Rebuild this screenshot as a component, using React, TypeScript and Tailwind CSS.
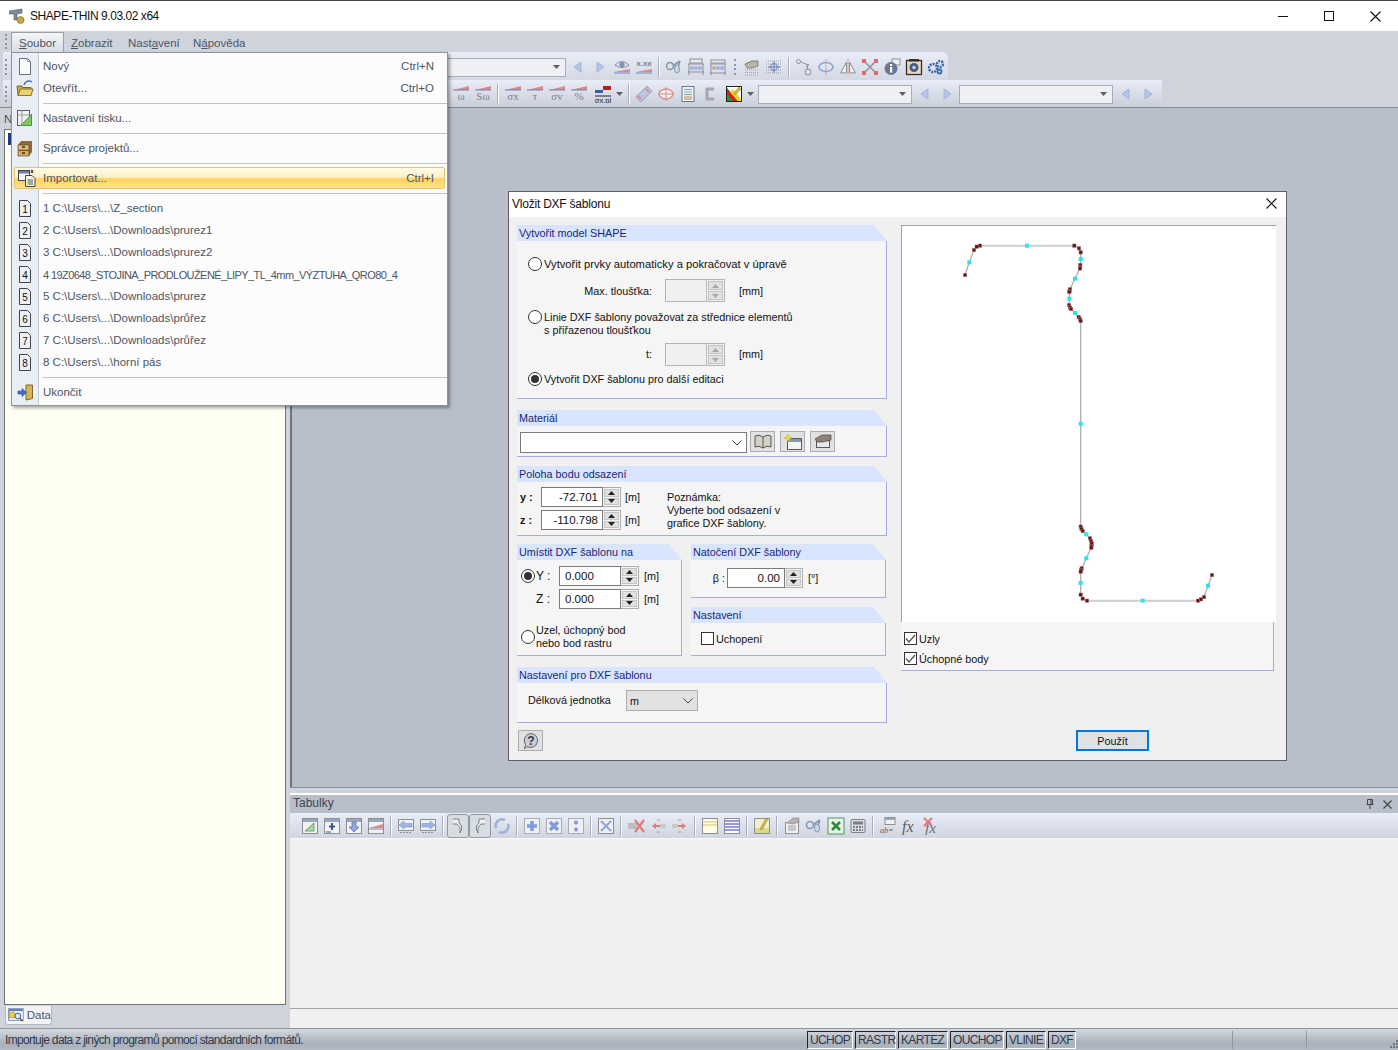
import React from "react";

// Small wedge used by the result-value toolbar icons
const Wedge = ({ label }: { label: string }) => (
    <svg width="18" height="18" viewBox="0 0 18 18">
        <path d="M1 5 L17 1 V5 Z" fill="#d98a8a" />
        <path d="M1 5 H17" stroke="#6f86b8" strokeWidth="1" />
        <text x="9" y="15" textAnchor="middle" fontSize="11" fill="#7b8290" fontFamily="Liberation Serif, serif">{label}</text>
    </svg>
);

const TableGrid = ({ head = "#9aa7c0", cell = "#f2f2f2" }: { head?: string; cell?: string }) => (
    <>
        <rect x="1.5" y="1.5" width="15" height="15" fill={cell} stroke="#8d8f94" />
        <rect x="2" y="2" width="14" height="3" fill={head} />
    </>
);

const icons: Record<string, React.ReactNode> = {
    arrL: <path d="M12 4 V14 L5 9 Z" fill="#b4c4ea" stroke="#a3b5df" />,
    arrR: <path d="M6 4 V14 L13 9 Z" fill="#b4c4ea" stroke="#a3b5df" />,
    eye: (
        <>
            <path d="M2 7 Q9 0 16 7 Q9 12 2 7 Z" fill="#dfe6f2" stroke="#7d8ba3" />
            <circle cx="9" cy="6.5" r="2.6" fill="#7c8fb0" />
            <path d="M1 14 L17 11 V14 Z" fill="#d98a8a" />
            <path d="M1 15 H17" stroke="#6f86b8" />
        </>
    ),
    xxx: (
        <>
            <text x="9" y="8" textAnchor="middle" fontSize="8" fontWeight="700" fill="#7b8290" fontFamily="Liberation Sans, sans-serif">x.xx</text>
            <path d="M1 14 L17 11 V14 Z" fill="#d98a8a" />
            <path d="M1 15 H17" stroke="#6f86b8" />
        </>
    ),
    glasses: (
        <>
            <circle cx="5" cy="8" r="3.5" fill="#dde4ee" stroke="#8597ae" strokeWidth="1.6" />
            <path d="M8 8 L12 5 L15 3 M12 12 L15 3" stroke="#8597ae" strokeWidth="1.6" fill="none" />
            <ellipse cx="12" cy="11" rx="2.5" ry="4" fill="#cdd8e6" stroke="#8597ae" />
        </>
    ),
    abacus: (
        <>
            <rect x="3" y="1" width="12" height="4" fill="#e6e9ee" stroke="#8d8f94" />
            <path d="M1 6 H17 M1 14 H17 M2 6 V17 M16 6 V17" stroke="#8d8f94" />
            <circle cx="5" cy="10" r="2" fill="#9fb0d8" /><circle cx="9" cy="10" r="2" fill="#9fb0d8" /><circle cx="13" cy="10" r="2" fill="#9fb0d8" />
        </>
    ),
    abacus2: (
        <>
            <rect x="2" y="2" width="14" height="3" fill="#e6e9ee" stroke="#8d8f94" />
            <path d="M1 6 H17 M1 15 H17 M2 6 V17 M16 6 V17" stroke="#8d8f94" />
            <circle cx="5" cy="10" r="2" fill="#b8b49a" /><circle cx="9" cy="10" r="2" fill="#9fb0d8" /><circle cx="13" cy="10" r="2" fill="#9fb0d8" />
        </>
    ),
    gridHand: (
        <>
            <path d="M2 12 H16 M2 14.500 H16 M2 17 H16" stroke="#9a9da3" strokeDasharray="1 1" />
            <path d="M2 6 L9 3 H15 V8 L9 10 H4 Z" fill="#b9b3ad" stroke="#85807a" />
        </>
    ),
    gridCross: (
        <>
            <path d="M1 3 H17 M1 6 H17 M1 9 H17 M1 12 H17 M1 15 H17" stroke="#9a9da3" strokeDasharray="1 1" />
            <circle cx="9" cy="9" r="3.500" fill="none" stroke="#6f7fc0" />
            <path d="M9 3 V15 M3 9 H15" stroke="#6f7fc0" />
        </>
    ),
    nodes: (
        <>
            <circle cx="3.500" cy="3.500" r="2" fill="none" stroke="#8d8f94" />
            <circle cx="13" cy="14" r="3" fill="none" stroke="#8d8f94" />
            <path d="M6 4 L13 7 L12 11 M14 6 L11 9" stroke="#8d8f94" fill="none" />
        </>
    ),
    rotate: (
        <>
            <ellipse cx="9" cy="9" rx="7" ry="4.500" fill="#dce5f4" stroke="#8da3cc" strokeWidth="1.500" />
            <path d="M9 1 V17" stroke="#d98a8a" strokeDasharray="2 1" />
        </>
    ),
    mirror: (
        <>
            <path d="M7.500 4 V15 H1.500 Z" fill="#eef0f3" stroke="#8d8f94" />
            <path d="M10.500 4 V15 H16.500 Z" fill="#eef0f3" stroke="#8d8f94" />
            <path d="M9 1 V17" stroke="#d98a8a" strokeDasharray="2 1" />
        </>
    ),
    scale: (
        <>
            <path d="M3 3 L15 15 M15 3 L3 15" stroke="#8d8f94" strokeWidth="1.500" />
            <path d="M1 1 h4 v4 h-4 Z M13 1 h4 v4 h-4 Z M1 13 h4 v4 h-4 Z M13 13 h4 v4 h-4 Z" fill="#e0696b" />
        </>
    ),
    info: (
        <>
            <rect x="9" y="1" width="8" height="6" fill="#eef0f3" stroke="#8d8f94" />
            <circle cx="8" cy="10.500" r="6.500" fill="#6c7796" />
            <rect x="7" y="9" width="2.200" height="5.500" fill="#fff" />
            <rect x="7" y="6" width="2.200" height="2" fill="#fff" />
        </>
    ),
    photo: (
        <>
            <rect x="1.500" y="2.500" width="15" height="14" fill="#e8d8b8" stroke="#303030" strokeWidth="1.300" />
            <circle cx="9" cy="9.500" r="4.500" fill="#3d5f96" />
            <circle cx="9" cy="9.500" r="1.700" fill="#e8d8b8" />
            <rect x="4" y="1" width="10" height="2.500" fill="#303030" />
        </>
    ),
    gears: (
        <>
            <circle cx="6" cy="10" r="4" fill="none" stroke="#3a6bb0" strokeWidth="2.500" strokeDasharray="2 1" />
            <circle cx="13" cy="6" r="3" fill="none" stroke="#3a6bb0" strokeWidth="2.500" strokeDasharray="2 1" />
            <circle cx="12.500" cy="13.500" r="2" fill="none" stroke="#3a6bb0" strokeWidth="1.800" />
        </>
    ),
    oxpl: (
        <>
            <rect x="1" y="5" width="8" height="3" fill="#3b5ca8" />
            <rect x="9" y="1" width="8" height="4" fill="#b32020" />
            <path d="M1 11 H17" stroke="#222" />
            <text x="9" y="17.500" textAnchor="middle" fontSize="7.500" fill="#222" fontFamily="Liberation Sans, sans-serif">σx,pl</text>
        </>
    ),
    ruler: (
        <>
            <path d="M1 12 L12 1 L17 6 L6 17 Z" fill="#b8c6e2" stroke="#8da3cc" />
            <path d="M3 11 L6 14 M11 4 L14 7" stroke="#e08a8a" strokeWidth="2" />
        </>
    ),
    target: (
        <>
            <ellipse cx="9" cy="9" rx="7" ry="5" fill="#f1f1f1" stroke="#d98a8a" strokeWidth="1.300" />
            <path d="M1 9 H17 M9 2 V16" stroke="#d98a8a" />
        </>
    ),
    listDoc: (
        <>
            <rect x="3" y="1.500" width="12" height="15" fill="#eef0f3" stroke="#73777f" />
            <path d="M5 4.500 H13 M5 7 H13" stroke="#8aa3d0" strokeWidth="1.200" />
            <path d="M5 9.500 H13" stroke="#7fb27f" strokeWidth="1.200" />
            <path d="M5 12 H13" stroke="#d0a070" strokeWidth="1.200" />
            <path d="M5 14 H13" stroke="#a0a0a0" strokeWidth="1.200" />
        </>
    ),
    bracket: <path d="M13 4 H6 V14 H13" fill="none" stroke="#a4a7ad" strokeWidth="3" />,
    colors: (
        <>
            <rect x="1.500" y="1.500" width="15" height="15" fill="#fff" stroke="#222" />
            <path d="M2 3 L13 16 H7 L2 10 Z" fill="#d62020" />
            <path d="M2 9 L8 16 H2 Z" fill="#1f9a2b" />
            <path d="M8 4 L16 14 V16 H13 L5 7 Z" fill="#f0d820" />
            <path d="M14 2 L16 4 L10 10 L9 8 Z" fill="#d9b94c" stroke="#80702c" strokeWidth=".5" />
        </>
    ),
    tAngle: (
        <>
            <TableGrid />
            <path d="M4 14 L13 6 V14 Z" fill="#a7d49f" stroke="#6fa66a" />
        </>
    ),
    tPlus: (
        <>
            <TableGrid />
            <path d="M9 6 V13 M6 9.500 H12" stroke="#33599c" strokeWidth="2" />
            <path d="M3 15 H8" stroke="#33599c" />
        </>
    ),
    tDown: (
        <>
            <TableGrid />
            <path d="M7 5 H11 V10 H14 L9 15 L4 10 H7 Z" fill="#8fa8d8" stroke="#6f88bc" />
        </>
    ),
    tWedge: (
        <>
            <TableGrid />
            <path d="M2 11 L16 7 V11 Z" fill="#d98a8a" />
            <path d="M2 12 H16" stroke="#6f86b8" />
        </>
    ),
    tLeft: (
        <>
            <rect x="1.500" y="2.500" width="15" height="11" fill="#eef0f3" stroke="#8d8f94" />
            <path d="M2 8 L7 4 V6.500 H15 V10 H7 V12 Z" fill="#9fb5e4" stroke="#7f95c8" strokeWidth=".6" />
            <path d="M3 15.500 H15" stroke="#8d8f94" strokeDasharray="2 1" />
        </>
    ),
    tRight: (
        <>
            <rect x="1.500" y="2.500" width="15" height="11" fill="#eef0f3" stroke="#8d8f94" />
            <path d="M16 8 L11 4 V6.500 H3 V10 H11 V12 Z" fill="#9fb5e4" stroke="#7f95c8" strokeWidth=".6" />
            <path d="M3 15.500 H15" stroke="#8d8f94" strokeDasharray="2 1" />
        </>
    ),
    undo: <path d="M4 2 H10 V6 Q15 9 11 16 Q12 10 8 7 H4" fill="#eef0f3" stroke="#7a7f88" />,
    redo: <path d="M14 2 H8 V6 Q3 9 7 16 Q6 10 10 7 H14" fill="#eef0f3" stroke="#7a7f88" />,
    sync: (
        <>
            <path d="M3 11 A6.500 6.500 0 0 1 12 3" fill="none" stroke="#9db0d6" strokeWidth="2.500" />
            <path d="M15 7 A6.500 6.500 0 0 1 6 15" fill="none" stroke="#9db0d6" strokeWidth="2.500" />
        </>
    ),
    sqPlus: (
        <>
            <rect x="1.500" y="1.500" width="15" height="15" fill="#eef0f3" stroke="#a9acb2" />
            <path d="M9 4 V14 M4 9 H14" stroke="#7f9bdc" strokeWidth="3.500" />
        </>
    ),
    sqMul: (
        <>
            <rect x="1.500" y="1.500" width="15" height="15" fill="#eef0f3" stroke="#a9acb2" />
            <path d="M5 5 L13 13 M13 5 L5 13" stroke="#7f9bdc" strokeWidth="3.500" />
        </>
    ),
    sqDiv: (
        <>
            <rect x="1.500" y="1.500" width="15" height="15" fill="#eef0f3" stroke="#a9acb2" />
            <circle cx="9" cy="5.500" r="2" fill="#7f9bdc" /><circle cx="9" cy="12.500" r="2" fill="#7f9bdc" />
        </>
    ),
    sqX: (
        <>
            <rect x="1.500" y="1.500" width="15" height="15" fill="#eef0f3" stroke="#8d8f94" />
            <path d="M4 4 L14 14 M14 4 L4 14" stroke="#8fa6da" strokeWidth="2" />
        </>
    ),
    delRow: (
        <>
            <path d="M1 6 H10 V12 H1 Z" fill="#bdbdbd" />
            <path d="M8 3 L17 15 M17 3 L8 15" stroke="#e07a7a" strokeWidth="2.200" />
        </>
    ),
    colL: (
        <>
            <path d="M3 9 L7 6 V8 H11 V10 H7 V12 Z" fill="#e07a7a" />
            <rect x="11" y="7" width="6" height="4" fill="#c9c9c9" />
            <path d="M8 3 H11 M8 15 H11" stroke="#a0a0a0" />
        </>
    ),
    colR: (
        <>
            <path d="M15 9 L11 6 V8 H7 V10 H11 V12 Z" fill="#e07a7a" />
            <rect x="1" y="7" width="6" height="4" fill="#c9c9c9" />
            <path d="M7 3 H10 M7 15 H10" stroke="#a0a0a0" />
        </>
    ),
    yellowT: (
        <>
            <rect x="1.500" y="1.500" width="15" height="15" fill="#fffde4" stroke="#8d8f94" />
            <path d="M2 5 H16 M2 8 H16" stroke="#d3c560" strokeWidth="1.200" />
        </>
    ),
    blueT: (
        <>
            <rect x="1.500" y="1.500" width="15" height="15" fill="#fff" stroke="#8d8f94" />
            <path d="M2 4 H16 M2 7 H16 M2 10 H16 M2 13 H16" stroke="#7378d0" strokeWidth="1.500" />
        </>
    ),
    pencilT: (
        <>
            <rect x="1.500" y="1.500" width="15" height="15" fill="#f0efcc" stroke="#8d8f94" />
            <path d="M2 11 H16 V16 H2 Z" fill="#dcd883" />
            <path d="M13 1 L15 2 L9 13 L7 12 Z" fill="#d9b94c" stroke="#8c7a30" strokeWidth=".5" />
        </>
    ),
    clipDoc: (
        <>
            <rect x="2.500" y="5.500" width="13" height="11" fill="#f2f2f2" stroke="#8d8f94" />
            <path d="M5 9 H13 M5 11 H13 M5 13 H13" stroke="#9a9da3" />
            <path d="M4 6 L10 1 H16 V5 L10 7 Z" fill="#b9b3ad" stroke="#85807a" strokeWidth=".6" />
        </>
    ),
    excel: (
        <>
            <rect x="1" y="1" width="16" height="16" fill="#e6f2e6" stroke="#4f9558" />
            <path d="M5 5 L13 13 M13 5 L5 13" stroke="#2c8a3a" strokeWidth="2.500" />
        </>
    ),
    calc: (
        <>
            <rect x="2" y="2.500" width="14" height="13" rx="1" fill="#dcdde0" stroke="#7f8288" />
            <rect x="4" y="4.500" width="10" height="3" fill="#7a7d82" />
            <path d="M4 10 H14 M4 13 H14" stroke="#5f6268" strokeDasharray="2 1" strokeWidth="1.400" />
        </>
    ),
    abEq: (
        <>
            <rect x="6" y="0.500" width="10" height="7" fill="#f2f2f2" stroke="#8d8f94" />
            <rect x="6" y="1" width="10" height="2" fill="#9aa7c0" />
            <text x="1" y="16" fontSize="8" fontStyle="italic" fill="#5c6066" fontFamily="Liberation Serif, serif">ab=</text>
        </>
    ),
    fx: <text x="1" y="15" fontSize="16" fontStyle="italic" fill="#5c6066" fontFamily="Liberation Serif, serif">fx</text>,
    fxDel: (
        <>
            <text x="2" y="16" fontSize="15" fontStyle="italic" fill="#6c7076" fontFamily="Liberation Serif, serif">fx</text>
            <path d="M1 1 L9 9 M9 1 L1 9" stroke="#e07a7a" strokeWidth="2" />
        </>
    ),
};

const Ic = ({ n }: { n: string }) => (
    <span className="w-[22px] h-[22px] flex items-center justify-center shrink-0">
        <svg width="18" height="18" viewBox="0 0 18 18">{icons[n]}</svg>
    </span>
);

const WIc = ({ label }: { label: string }) => (
    <span className="w-[22px] h-[22px] flex items-center justify-center shrink-0">
        <Wedge label={label} />
    </span>
);

const Sep = () => (
    <span className="w-[8px] h-[20px] flex justify-center shrink-0">
        <span className="w-px h-full bg-[#a8adb8] border-r border-white box-content" />
    </span>
);

const Grip = () => (
    <span className="w-[3px] h-[18px] shrink-0 flex flex-col justify-between py-[1px]">
        {[0, 1, 2, 3].map((i) => (
            <span key={i} className="w-[2px] h-[2px] bg-[#8d93a0]" />
        ))}
    </span>
);

const Caret = () => (
    <svg width="7" height="4" viewBox="0 0 7 4" className="shrink-0">
        <path d="M0 0 H7 L3.500 4 Z" fill="#606060" />
    </svg>
);

const TbCombo = ({ w }: { w: string }) => (
    <span className={`${w} h-[19px] shrink-0 bg-[#eef0f5] border border-[#a9adb4] flex items-center justify-end pr-[5px]`}>
        <Caret />
    </span>
);

// File menu
const menuText = "text-[#4d5564]";

const NumDoc = ({ n }: { n: number }) => (
    <svg width="14" height="17" viewBox="0 0 14 17">
        <path d="M1.500 .5 H9.500 L12.500 3.500 V16.500 H1.500 Z" fill="#eef0f3" stroke="#40454d" />
        <text x="7" y="13" textAnchor="middle" fontSize="10" fill="#111" fontFamily="Liberation Sans, sans-serif">{n}</text>
    </svg>
);

const MenuIcons: Record<string, React.ReactNode> = {
    new: (
        <svg width="14" height="17" viewBox="0 0 14 17">
            <path d="M1.500 .5 H9.500 L12.500 3.500 V16.500 H1.500 Z" fill="#fbfbfb" stroke="#6a6f78" />
            <path d="M9.500 .5 V3.500 H12.500" fill="none" stroke="#9a9fa8" />
        </svg>
    ),
    open: (
        <svg width="18" height="17" viewBox="0 0 18 17">
            <path d="M8 5 A5 5 0 0 1 16 2" fill="none" stroke="#4f78b8" strokeWidth="1.500" />
            <path d="M1 6 H6 L7 7.500 H15 V15.500 H2 Z" fill="#c7a53f" stroke="#7d6a28" />
            <path d="M2 15.500 L4.500 9 H17 L15 15.500 Z" fill="#eed271" stroke="#8a7430" />
        </svg>
    ),
    print: (
        <svg width="18" height="18" viewBox="0 0 18 18">
            <rect x="1.500" y="1.500" width="12" height="15" fill="#f2f2f2" stroke="#5c6066" />
            <path d="M1.500 6 H13.500 M6 1.500 V16.500" stroke="#9a9da3" />
            <path d="M5 16.500 L15.500 5 V16.500 Z" fill="#7fc764" stroke="#4f9a3d" />
        </svg>
    ),
    cab: (
        <svg width="18" height="17" viewBox="0 0 18 17">
            <path d="M5 1 H16 V12 L13 16 H2 V5 Z" fill="#8a6a3c" />
            <path d="M2 5 H13 V10 H2 Z" fill="#e6bd78" stroke="#5d4522" strokeWidth=".7" />
            <path d="M2 10.500 H13 V16 H2 Z" fill="#d9a95f" stroke="#5d4522" strokeWidth=".7" />
            <path d="M6 7 H9 M6 13 H9" stroke="#3a2a10" strokeWidth="1.300" />
        </svg>
    ),
    import: (
        <svg width="18" height="18" viewBox="0 0 18 18">
            <rect x=".5" y="1.500" width="11" height="10" fill="#f5f5f5" stroke="#40454d" />
            <rect x="1" y="2" width="10" height="2.500" fill="#6d7fa8" />
            <path d="M7.500 6.500 H14 L17 9.500 V17.500 H7.500 Z" fill="#f7f4e6" stroke="#40454d" />
            <path d="M9.500 11 H15 M9.500 13 H15 M9.500 15 H15" stroke="#55595f" />
            <path d="M13 1 L15 4 M15 1 L13 4" stroke="#222" />
        </svg>
    ),
    exit: (
        <svg width="17" height="17" viewBox="0 0 17 17">
            <path d="M9 1 L15.500 1 V14.500 L9 16 Z" fill="#d8b155" stroke="#7d6a28" />
            <path d="M1 7 H5 V4.500 L9.500 8.500 L5 12.500 V10 H1 Z" fill="#3f6fc4" stroke="#264d94" strokeWidth=".6" />
        </svg>
    ),
};

const MenuRow = ({ icon, label, kbd, labelClass = "" }: { icon: React.ReactNode; label: string; kbd?: string; labelClass?: string }) => (
    <div className="h-[22px] flex items-center">
        <div className="w-[26px] flex justify-center shrink-0">{icon}</div>
        <span className={`ml-[5px] pt-[2px] whitespace-nowrap ${menuText} ${labelClass}`}>{label}</span>
        {kbd && <span className={`ml-auto mr-[13px] pt-[2px] ${menuText}`}>{kbd}</span>}
    </div>
);

const MenuSep = () => (
    <div className="h-[8px] flex items-center pl-[31px]">
        <div className="h-px w-full bg-[#bfc2c7]" />
    </div>
);

const FileMenu = () => (
    <div className="absolute left-[11px] top-[52px] w-[437px] h-[354px] z-20 bg-[#fcfcfc] border border-[#8f939a] shadow-[2px_2px_3px_rgba(0,0,0,0.35)] pt-[2px] bg-[linear-gradient(90deg,#e9edf6_26px,#c5cad4_26px,#c5cad4_27px,#fcfcfc_27px)]">
        <MenuRow icon={MenuIcons.new} label="Nový" kbd="Ctrl+N" />
        <MenuRow icon={MenuIcons.open} label="Otevřít..." kbd="Ctrl+O" />
        <MenuSep />
        <MenuRow icon={MenuIcons.print} label="Nastavení tisku..." />
        <MenuSep />
        <MenuRow icon={MenuIcons.cab} label="Správce projektů..." />
        <MenuSep />
        <div className="h-[22px] flex items-center mx-[2px] border border-[#e5c365] rounded-[2px] bg-[linear-gradient(#fffbea_0%,#fff1c4_45%,#fdd25f_55%,#fee28e_100%)]">
            <div className="w-[23px] flex justify-center shrink-0">{MenuIcons.import}</div>
            <span className={`ml-[5px] pt-[2px] ${menuText}`}>Importovat...</span>
            <span className={`ml-auto mr-[10px] pt-[2px] ${menuText}`}>Ctrl+I</span>
        </div>
        <MenuSep />
        {[
            "1 C:\\Users\\...\\Z_section",
            "2 C:\\Users\\...\\Downloads\\prurez1",
            "3 C:\\Users\\...\\Downloads\\prurez2",
            "4 19Z0648_STOJINA_PRODLOUŽENÉ_LIPY_TL_4mm_VÝZTUHA_QRO80_4",
            "5 C:\\Users\\...\\Downloads\\prurez",
            "6 C:\\Users\\...\\Downloads\\průřez",
            "7 C:\\Users\\...\\Downloads\\průřez",
            "8 C:\\Users\\...\\horní pás",
        ].map((t, i) => (
            <MenuRow key={t + i} icon={<NumDoc n={i + 1} />} label={t} labelClass={i === 3 ? "text-[11px] tracking-[-0.58px]" : ""} />
        ))}
        <MenuSep />
        <MenuRow icon={MenuIcons.exit} label="Ukončit" />
    </div>
);

// Dialog pieces
const Group = ({ title, className, children }: { title: string; className: string; children?: React.ReactNode }) => (
    <div className={`flex flex-col shrink-0 ${className}`}>
        <div className="h-[16px] shrink-0 pl-[2px] flex items-center bg-[#d9e5fc] text-[#16267a] [clip-path:polygon(0_0,calc(100%-13px)_0,100%_100%,0_100%)]">
            {title}
        </div>
        <div className="flex-1 bg-[#f5f5f5] border-r border-b border-[#a5abe8]">{children}</div>
    </div>
);

const Radio = ({ on }: { on?: boolean }) => (
    <span className="w-[14px] h-[14px] shrink-0 rounded-full border border-[#333] bg-white flex items-center justify-center">
        {on && <span className="w-[8px] h-[8px] rounded-full bg-[#333]" />}
    </span>
);

const Check = ({ on }: { on?: boolean }) => (
    <span className="w-[13px] h-[13px] shrink-0 border border-[#333] bg-white flex items-center justify-center">
        {on && (
            <svg width="11" height="11" viewBox="0 0 11 11">
                <path d="M1 5.500 L4 9 L10 2" fill="none" stroke="#555" strokeWidth="1.300" />
            </svg>
        )}
    </span>
);

const SpinBtns = ({ off }: { off?: boolean }) => {
    const c = off ? "#a8a8a8" : "#222";
    return (
        <span className={`w-[18px] h-full shrink-0 flex flex-col gap-px p-px ${off ? "border-l border-[#bdbdbd]" : "border border-l-0 border-[#adadad]"}`}>
            <span className="flex-1 flex items-center justify-center bg-[#e1e1e1] border border-[#c4c4c4]">
                <svg width="7" height="4" viewBox="0 0 7 4"><path d="M0 4 H7 L3.500 0 Z" fill={c} /></svg>
            </span>
            <span className="flex-1 flex items-center justify-center bg-[#e1e1e1] border border-[#c4c4c4]">
                <svg width="7" height="4" viewBox="0 0 7 4"><path d="M0 0 H7 L3.500 4 Z" fill={c} /></svg>
            </span>
        </span>
    );
};

const Spin = ({ value, w, left }: { value: string; w: string; left?: boolean }) => (
    <span className="flex h-[20px] shrink-0">
        <span className={`${w} h-full pt-[2px] bg-white border border-[#7a7a7a] flex items-center text-[11.500px] ${left ? "pl-[5px]" : "justify-end pr-[4px]"}`}>{value}</span>
        <SpinBtns />
    </span>
);

const OffSpin = () => (
    <span className="flex w-[60px] h-[23px] shrink-0 border border-[#b4b4b4] bg-[#f0f0f0] justify-end">
        <SpinBtns off />
    </span>
);

const SmallBtn = ({ children }: { children: React.ReactNode }) => (
    <span className="w-[25px] h-[21px] shrink-0 bg-[#e1e1e1] border border-[#adadad] flex items-center justify-center">{children}</span>
);

const SECTION: [number, number][] = [
    [965, 275], [969.3, 262.3], [974, 250], [976.7, 246.7], [980, 245.7], [1027, 245.7], [1074.3, 245.7], [1079, 248.3],
    [1080.7, 252.3], [1080.7, 259], [1080.3, 266], [1080, 268], [1075, 278.7], [1070, 289.3], [1069.3, 291.7], [1069.3, 298.7],
    [1069, 305], [1071, 309], [1075, 313], [1078.7, 317], [1080.7, 321], [1080.7, 423.7], [1080.7, 526.7], [1082.7, 531],
    [1086.3, 534.3], [1090, 538.3], [1091.7, 543.3], [1091.3, 547.7], [1086.3, 558.3], [1081.7, 568.3], [1080.7, 571.7],
    [1080.7, 583], [1080.7, 594.7], [1082.7, 598.7], [1087, 600.7], [1142.7, 600.7], [1198, 600.7], [1201, 599.3], [1204, 597],
    [1208, 585.7], [1212, 575],
];

const CYAN: [number, number][] = [
    [969.3, 262.3], [1027, 245.7], [1080.7, 259], [1075, 278.7], [1069.3, 298.7], [1075, 313], [1080.7, 423.7],
    [1086.3, 534.3], [1086.3, 558.3], [1080.7, 583], [1142.7, 600.7], [1208, 585.7],
];

const RED: [number, number][] = [
    [965, 275], [974, 250], [976.7, 246.7], [980, 245.7], [1074.3, 245.7], [1079, 248.3], [1080.7, 252.3], [1080.3, 265], [1080.2, 267],
    [1080, 268.500], [1070, 289.3], [1069.6, 291], [1069.3, 292], [1069, 305], [1070, 307.500], [1071, 309], [1078.7, 317], [1080, 319], [1080.7, 321],
    [1080.7, 526.7], [1081.500, 529], [1082.7, 531], [1090, 538.3], [1091, 541], [1091.7, 543.3], [1091.5, 546], [1091.3, 547.7],
    [1081.7, 568.3], [1081, 570], [1080.7, 571.7], [1080.7, 594.7], [1082.7, 598.7], [1087, 600.7], [1198, 600.7], [1201, 599.3], [1204, 597], [1212, 575],
];

const DxfPreview = () => (
    <svg viewBox="901 225 375 397" width="375" height="397" className="block">
        <polyline points={SECTION.map((p) => p.join(",")).join(" ")} fill="none" stroke="#a9a9a9" strokeWidth="1.200" />
        <path d="M980 245.700 H1074.300 M1087 600.700 H1198" stroke="#cfcfcf" strokeWidth="2" />
        {RED.map(([x, y]) => (
            <rect key={`${x}-${y}`} x={x - 1.75} y={y - 1.75} width="3.500" height="3.500" fill="#7e0a0a" stroke="#8a9a9a" strokeWidth=".4" />
        ))}
        {CYAN.map(([x, y]) => (
            <rect key={`${x}-${y}`} x={x - 2} y={y - 2} width="4" height="4" fill="#25e6ea" />
        ))}
    </svg>
);

const DxfDialog = () => (
    <div className="absolute left-[508px] top-[191px] w-[779px] h-[570px] z-10 bg-[#f0f0f0] border border-[#5f6166] text-[#111] text-[10.800px]">
        <div className="h-[25px] pb-[2px] bg-white flex items-center pl-[3px] pr-[9px] justify-between text-[12px] tracking-[-0.22px]">
            <span>Vložit DXF šablonu</span>
            <svg width="11" height="11" viewBox="0 0 11 11">
                <path d="M.5 .5 L10.500 10.500 M10.500 .5 L.5 10.500" stroke="#111" strokeWidth="1.100" />
            </svg>
        </div>
        <div className="flex pl-[8px] pt-[8px]">
            <div className="w-[370px] flex flex-col">
                <Group title="Vytvořit model SHAPE" className="h-[174px]">
                    <div className="pl-[11px] pt-[15px] flex flex-col">
                        <div className="h-[16px] flex items-center gap-[2px]">
                            <Radio />
                            <span className="pt-[2px] text-[11.200px]">Vytvořit prvky automaticky a pokračovat v úpravě</span>
                        </div>
                        <div className="mt-[7px] flex items-center">
                            <span className="w-[124px] pt-[2px] text-right">Max. tloušťka:</span>
                            <span className="ml-[13px]"><OffSpin /></span>
                            <span className="ml-[14px] pt-[2px]">[mm]</span>
                        </div>
                        <div className="mt-[8px] flex items-start gap-[2px]">
                            <Radio />
                            <span className="pt-[1px] leading-[13px]">Linie DXF šablony považovat za střednice elementů<br />s přiřazenou tloušťkou</span>
                        </div>
                        <div className="mt-[6px] flex items-center">
                            <span className="w-[124px] text-right">t:</span>
                            <span className="ml-[13px]"><OffSpin /></span>
                            <span className="ml-[14px]">[mm]</span>
                        </div>
                        <div className="mt-[5px] h-[16px] flex items-center gap-[2px]">
                            <Radio on />
                            <span>Vytvořit DXF šablonu pro další editaci</span>
                        </div>
                    </div>
                </Group>
                <Group title="Materiál" className="h-[47px] mt-[11px]">
                    <div className="flex items-start pl-[3px] pt-[5px]">
                        <span className="w-[227px] h-[21px] mt-px bg-white border border-[#7a7a7a] flex items-center justify-end pr-[4px]">
                            <svg width="10" height="6" viewBox="0 0 10 6"><path d="M.5 .5 L5 5 L9.500 .5" fill="none" stroke="#444" /></svg>
                        </span>
                        <span className="ml-[3px] flex gap-[5px]">
                            <SmallBtn>
                                <svg width="18" height="15" viewBox="0 0 18 15">
                                    <path d="M9 3 Q5 0 1 2 V13 Q5 11 9 14 Q13 11 17 13 V2 Q13 0 9 3 Z" fill="#d5d0c2" stroke="#55595f" />
                                    <path d="M9 3 V14" stroke="#55595f" />
                                </svg>
                            </SmallBtn>
                            <SmallBtn>
                                <svg width="18" height="16" viewBox="0 0 18 16">
                                    <rect x="3.500" y="4.500" width="14" height="11" fill="#f5f5f5" stroke="#55595f" />
                                    <rect x="4" y="5" width="13" height="3" fill="#8a97b0" />
                                    <path d="M4 0 L5.200 2.800 L8 4 L5.200 5.200 L4 8 L2.800 5.200 L0 4 L2.800 2.800 Z" fill="#f2e12e" stroke="#a59a20" strokeWidth=".4" />
                                </svg>
                            </SmallBtn>
                            <SmallBtn>
                                <svg width="18" height="15" viewBox="0 0 18 15">
                                    <rect x="2.500" y="6.500" width="13" height="7" fill="#e8e8e8" stroke="#55595f" />
                                    <path d="M1 5 L8 1 H17 V6 L9 8 H3 Z" fill="#8f8378" stroke="#4f4840" strokeWidth=".7" />
                                </svg>
                            </SmallBtn>
                        </span>
                    </div>
                </Group>
                <Group title="Poloha bodu odsazení" className="h-[70px] mt-[9px]">
                    <div className="flex">
                        <div className="w-[150px] pl-[3px] pt-[5px] flex flex-col gap-[3px]">
                            <div className="flex items-center">
                                <span className="w-[21px] font-bold">y :</span>
                                <Spin value="-72.701" w="w-[62px]" />
                                <span className="ml-[4px]">[m]</span>
                            </div>
                            <div className="flex items-center">
                                <span className="w-[21px] font-bold">z :</span>
                                <Spin value="-110.798" w="w-[62px]" />
                                <span className="ml-[4px]">[m]</span>
                            </div>
                        </div>
                        <div className="pt-[9px] leading-[13px]">
                            Poznámka:<br />Vyberte bod odsazení v<br />grafice DXF šablony.
                        </div>
                    </div>
                </Group>
                <div className="flex mt-[8px] gap-[9px]">
                    <Group title="Umístit DXF šablonu na" className="w-[165px] h-[112px]">
                        <div className="pl-[4px] pt-[6px] flex flex-col">
                            <div className="flex items-center">
                                <Radio on />
                                <span className="w-[23px] ml-px text-[12px]">Y :</span>
                                <Spin value="0.000" w="w-[62px]" left />
                                <span className="ml-[5px]">[m]</span>
                            </div>
                            <div className="flex items-center mt-[3px]">
                                <span className="w-[38px] pl-[15px] text-[12px]">Z :</span>
                                <Spin value="0.000" w="w-[62px]" left />
                                <span className="ml-[5px]">[m]</span>
                            </div>
                            <div className="flex items-center mt-[15px] gap-px">
                                <Radio />
                                <span className="leading-[13px]">Uzel, úchopný bod<br />nebo bod rastru</span>
                            </div>
                        </div>
                    </Group>
                    <div className="flex flex-col gap-[9px]">
                        <Group title="Natočení DXF šablony" className="w-[195px] h-[54px]">
                            <div className="flex items-center pt-[8px]">
                                <span className="w-[36px] text-right pr-[2px]">β :</span>
                                <Spin value="0.00" w="w-[58px]" />
                                <span className="ml-[5px]">[°]</span>
                            </div>
                        </Group>
                        <Group title="Nastavení" className="w-[195px] h-[49px]">
                            <div className="flex items-center pl-[10px] pt-[9px] gap-[2px]">
                                <Check />
                                <span className="pt-[2px]">Uchopení</span>
                            </div>
                        </Group>
                    </div>
                </div>
                <Group title="Nastavení pro DXF šablonu" className="h-[56px] mt-[11px]">
                    <div className="flex items-center pl-[11px] pt-[7px]">
                        <span className="w-[98px]">Délková jednotka</span>
                        <span className="w-[72px] h-[21px] bg-[#e1e1e1] border border-[#adadad] flex items-center justify-between pl-[3px] pr-[4px]">
                            <span className="pt-[2px]">m</span>
                            <svg width="10" height="6" viewBox="0 0 10 6"><path d="M.5 .5 L5 5 L9.500 .5" fill="none" stroke="#444" /></svg>
                        </span>
                    </div>
                </Group>
                <div className="mt-[7px] ml-px">
                    <SmallBtn>
                        <svg width="18" height="18" viewBox="0 0 18 18">
                            <path d="M9 1.500 A7 7 0 1 1 5 14.500 L2.500 17 L3.500 12.500 A7 7 0 0 1 9 1.500 Z" fill="#c9ccd2" stroke="#5f6670" />
                            <text x="9" y="13" textAnchor="middle" fontSize="12" fontWeight="700" fill="#2f3a55" fontFamily="Liberation Sans, sans-serif">?</text>
                        </svg>
                    </SmallBtn>
                </div>
            </div>
            <div className="ml-[14px] w-[375px] flex flex-col">
                <div className="h-[397px] bg-white border-t border-l border-[#a0a0a0] overflow-hidden">
                    <div className="-mt-px -ml-px"><DxfPreview /></div>
                </div>
                <div className="w-[373px] h-[49px] bg-[#f5f5f5] border-r border-b border-[#a5abe8] pl-[3px] pt-[10px] flex flex-col gap-[7px]">
                    <div className="flex items-center gap-[2px]"><Check on /><span className="pt-[2px]">Uzly</span></div>
                    <div className="flex items-center gap-[2px]"><Check on /><span className="pt-[2px]">Úchopné body</span></div>
                </div>
                <div className="mt-[59px] ml-[175px] w-[73px] h-[21px] pt-[2px] bg-[#e1e1e1] border-2 border-[#0078d7] flex items-center justify-center">Použít</div>
            </div>
        </div>
    </div>
);

const Underlined = ({ a, u, b }: { a: string; u: string; b: string }) => (
    <span className="text-[#4d5564] whitespace-nowrap">
        {a}
        <span className="underline">{u}</span>
        {b}
    </span>
);

export default function App() {
    return (
        <div className="relative w-[1398px] h-[1050px] overflow-hidden flex flex-col bg-[#ced3dc] text-[11.500px] leading-none font-['Liberation_Sans',sans-serif]">
            {/* Window title */}
            <div className="h-[31px] shrink-0 bg-white border-t border-[#444] flex items-center pl-[9px] text-[12px] tracking-[-0.45px] text-[#111]">
                <svg width="17" height="17" viewBox="0 0 17 17">
                    <path d="M0 3 L13 1 V5 L8 6 V12 H5 V6 L0 6 Z" fill="#7f8a9c" stroke="#4f5866" strokeWidth=".6" />
                    <circle cx="11.500" cy="12" r="3.500" fill="#c9a53c" stroke="#7d6a28" strokeWidth=".6" />
                </svg>
                <span className="ml-[4px]">SHAPE-THIN 9.03.02 x64</span>
                <div className="ml-auto flex items-center">
                    <span className="w-[46px] flex justify-center"><span className="w-[10px] h-px bg-[#111]" /></span>
                    <span className="w-[46px] flex justify-center"><span className="w-[10px] h-[10px] border border-[#111]" /></span>
                    <span className="w-[46px] flex justify-center">
                        <svg width="11" height="11" viewBox="0 0 11 11"><path d="M.5 .5 L10.500 10.500 M10.500 .5 L.5 10.500" stroke="#111" strokeWidth="1.100" /></svg>
                    </span>
                </div>
            </div>

            {/* Menu bar */}
            <div className="h-[21px] shrink-0 flex items-center pl-[5px]">
                <Grip />
                <span className="ml-[3px] w-[53px] h-[20px] mt-[1px] pt-[3px] flex items-center justify-center border border-b-0 border-[#9ba0a8] bg-[linear-gradient(#f4f5f8,#d8dce4)]">
                    <Underlined a="" u="S" b="oubor" />
                </span>
                <span className="ml-[7px] w-[57px] pt-[4px]"><Underlined a="" u="Z" b="obrazit" /></span>
                <span className="w-[65px] pt-[4px]"><Underlined a="Nast" u="a" b="vení" /></span>
                <span className="pt-[4px]"><Underlined a="N" u="á" b="pověda" /></span>
            </div>

            {/* Toolbars */}
            <div className="h-[28px] shrink-0 w-[945px] ml-[3px] pt-[2px] rounded-tr-[6px] bg-[linear-gradient(#e9edf7,#d4d8e3)] flex items-center pl-[2px]">
                <Grip />
                <span className="ml-[273px]"><TbCombo w="w-[285px]" /></span>
                <span className="ml-px flex items-center">
                    <Ic n="arrL" /><Ic n="arrR" /><Ic n="eye" /><Ic n="xxx" /><Sep />
                    <Ic n="glasses" /><Ic n="abacus" /><Ic n="abacus2" />
                    <span className="w-[12px] flex justify-center"><Grip /></span>
                    <Ic n="gridHand" /><Ic n="gridCross" /><Sep />
                    <Ic n="nodes" /><Ic n="rotate" /><Ic n="mirror" /><Ic n="scale" /><Ic n="info" /><Ic n="photo" /><Ic n="gears" />
                </span>
            </div>
            <div className="h-[27px] shrink-0 w-[1159px] ml-[3px] pt-[1px] rounded-br-[6px] bg-[linear-gradient(#e9edf7,#c9ced9)] flex items-center pl-[2px]">
                <Grip />
                <span className="ml-[442px] flex items-center">
                    <WIc label="ω" /><WIc label="Sω" /><Sep />
                    <WIc label="σx" /><WIc label="τ" /><WIc label="σv" /><WIc label="%" />
                    <span className="ml-[2px] flex"><Ic n="oxpl" /></span>
                    <span className="ml-[2px] mr-[2px]"><Caret /></span><Sep />
                    <Ic n="ruler" /><Ic n="target" /><Ic n="listDoc" /><Ic n="bracket" />
                    <span className="ml-[2px] flex"><Ic n="colors" /></span>
                    <span className="ml-[2px] mr-[4px]"><Caret /></span>
                    <TbCombo w="w-[154px]" />
                    <span className="ml-[2px] flex"><Ic n="arrL" /><Ic n="arrR" /></span>
                    <span className="ml-[1px]"><TbCombo w="w-[154px]" /></span>
                    <span className="ml-[2px] flex"><Ic n="arrL" /><Ic n="arrR" /></span>
                </span>
            </div>
            <div className="h-[1px] shrink-0 bg-[#83878f]" />

            {/* Work area */}
            <div className="flex-1 flex min-h-0">
                <div className="w-[290px] shrink-0 flex flex-col pl-[4px]">
                    <div className="h-[21px] shrink-0 flex items-center text-[#4d5564] pt-[2px]">N</div>
                    <div className="h-[876px] w-[282px] shrink-0 bg-[#fefef2] border border-[#6f737a] pl-[3px] pt-[3px]">
                        <span className="block w-[9px] h-[12px] bg-[#24368a]" />
                    </div>
                    <div className="mt-px ml-px w-[47px] h-[19px] rounded-b-[3px] bg-[#f2f4f8] border border-t-0 border-[#b4b8c0] flex items-center pl-[2px] gap-[2px] text-[#4d5564]">
                        <svg width="17" height="15" viewBox="0 0 17 15">
                            <rect x=".5" y=".5" width="15" height="12" fill="#f5f7fb" stroke="#7f93bd" />
                            <rect x="1" y="1" width="14" height="2" fill="#5d7bb8" />
                            <rect x="1.500" y="4" width="5" height="6" fill="#eecb4d" stroke="#a58a25" strokeWidth=".6" />
                            <circle cx="10" cy="8" r="3" fill="#d2e6f7" stroke="#3d5f96" />
                            <path d="M12 10 L15 13.500" stroke="#7a5a25" strokeWidth="1.500" />
                        </svg>
                        <span className="pt-[2px]">Data</span>
                    </div>
                </div>

                <div className="flex-1 flex flex-col min-w-0">
                    <div className="h-[679px] shrink-0 bg-[#b8bfca] border-l-2 border-[#6f737a]" />
                    <div className="h-[7px] shrink-0 border-t border-[#8a8f98] border-b border-b-white bg-[#ced3dc]" />
                    <div className="h-[19px] shrink-0 bg-[#b8bfca] border-t border-white flex items-center pl-[3px] pr-[6px] justify-between text-[#3d4656] text-[12px]">
                        <span className="pb-[3px]">Tabulky</span>
                        <span className="flex items-center gap-[9px]">
                            <svg width="8" height="10" viewBox="0 0 8 10"><path d="M1.500 .5 H6.500 V5.500 H1.500 Z M.5 5.500 H7.500 M4 5.500 V10 M5 1 V5" fill="none" stroke="#444" /></svg>
                            <svg width="9" height="9" viewBox="0 0 9 9"><path d="M.5 .5 L8.500 8.500 M8.500 .5 L.5 8.500" stroke="#444" strokeWidth="1.200" /></svg>
                        </span>
                    </div>
                    <div className="h-[25px] shrink-0 bg-[linear-gradient(#e9edf7,#cfd4df)] flex items-center pl-[9px]">
                        <Ic n="tAngle" /><Ic n="tPlus" /><Ic n="tDown" /><Ic n="tWedge" /><Sep />
                        <Ic n="tLeft" /><Ic n="tRight" /><Sep />
                        <span className="rounded-[3px] border border-[#8f9aa0] bg-[#d7dde0] -my-px"><span className="-mx-px block"><Ic n="undo" /></span></span>
                        <span className="rounded-[3px] border border-[#8f9aa0] bg-[#d7dde0] -my-px"><span className="-mx-px block"><Ic n="redo" /></span></span>
                        <Ic n="sync" /><Sep />
                        <Ic n="sqPlus" /><Ic n="sqMul" /><Ic n="sqDiv" /><Sep />
                        <Ic n="sqX" /><Sep />
                        <Ic n="delRow" /><Ic n="colL" /><Ic n="colR" /><Sep />
                        <Ic n="yellowT" /><Ic n="blueT" /><Sep />
                        <Ic n="pencilT" /><Sep />
                        <Ic n="clipDoc" /><Ic n="glasses" /><Ic n="excel" /><Ic n="calc" /><Sep />
                        <Ic n="abEq" /><Ic n="fx" /><Ic n="fxDel" />
                    </div>
                    <div className="h-[171px] shrink-0 bg-[#f0f0f0] border-t border-[#f8f8f8] border-b border-b-[#a0a3a8]" />
                    <div className="flex-1 bg-[#f0f0f0]" />
                </div>
            </div>

            {/* Status bar */}
            <div className="h-[22px] shrink-0 border-t border-[#8f949c] bg-[linear-gradient(#d4d8df,#aab0ba_70%,#b4bac3)] flex items-center pl-[5px] text-[12px] text-[#2f3a4c] tracking-[-0.65px]">
                <span className="w-[802px] whitespace-nowrap">Importuje data z jiných programů pomocí standardních formátů.</span>
                <span className="flex items-center gap-[2px] h-[18px]">
                    {[
                        ["UCHOP", "w-[46px]"],
                        ["RASTR", "w-[41px]"],
                        ["KARTEZ", "w-[50px]"],
                        ["OUCHOP", "w-[54px]"],
                        ["VLINIE", "w-[40px]"],
                        ["DXF", "w-[28px]"],
                    ].map(([t, w]) => (
                        <span key={t} className={`${w} h-full flex items-center pl-[2px] border-t border-l border-t-[#222] border-l-[#222] border-r border-b border-r-white border-b-white`}>{t}</span>
                    ))}
                </span>
                <span className="ml-[156px] w-px h-[18px] bg-[#9298a2]" />
                <span className="ml-[73px] w-px h-[18px] bg-[#9298a2]" />
                <svg width="10" height="10" viewBox="0 0 10 10" className="ml-auto self-end mb-px">
                    <path d="M8 1 h2 v2 h-2 Z M5 4 h2 v2 h-2 Z M8 4 h2 v2 h-2 Z M2 7 h2 v2 h-2 Z M5 7 h2 v2 h-2 Z M8 7 h2 v2 h-2 Z" fill="#6f747c" />
                </svg>
            </div>

            <FileMenu />
            <DxfDialog />
        </div>
    );
}
